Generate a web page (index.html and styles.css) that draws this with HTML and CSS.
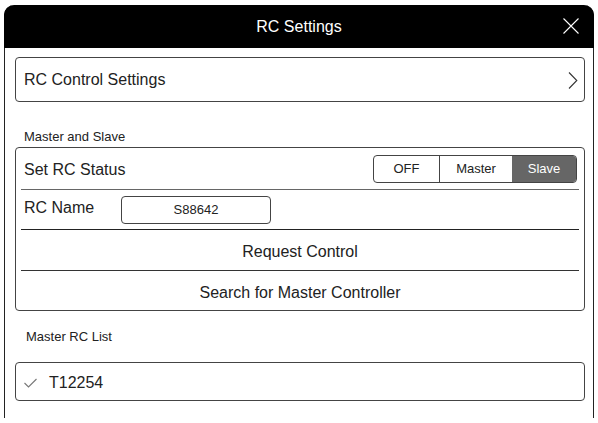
FILE: index.html
```html
<!DOCTYPE html>
<html>
<head>
<meta charset="utf-8">
<link rel="stylesheet" href="styles.css">
</head>
<body>
<div class="dialog">
  <div class="header">
    <span class="title">RC Settings</span>
    <svg class="close" width="16" height="16" viewBox="0 0 16 16"><path d="M0.5 0.5 L15.5 15.5 M15.5 0.5 L0.5 15.5" stroke="#fff" stroke-width="1.1" fill="none"/></svg>
  </div>
  <div class="content">
    <div class="box nav-row">
      <span>RC Control Settings</span>
      <svg class="chev" width="10" height="17" viewBox="0 0 10 17"><path d="M1 0.5 L8.8 8.5 L1 16.5" stroke="#333" stroke-width="1.1" fill="none"/></svg>
    </div>
    <div class="section-label label-ms">Master and Slave</div>
    <div class="box group">
      <div class="row status-row">
        <span>Set RC Status</span>
        <div class="seg">
          <div class="seg-item off">OFF</div>
          <div class="seg-item master">Master</div>
          <div class="seg-item slave active">Slave</div>
        </div>
      </div>
      <div class="row name-row">
        <span class="name-label">RC Name</span>
        <div class="name-input">S88642</div>
      </div>
      <div class="row action">Request Control</div>
      <div class="row action last">Search for Master Controller</div>
    </div>
    <div class="section-label label-list">Master RC List</div>
    <div class="box list-row">
      <svg class="check" width="13" height="10" viewBox="0 0 13 10"><path d="M0.5 5 L4.5 9 L12.5 1" stroke="#777" stroke-width="1.1" fill="none"/></svg>
      <span>T12254</span>
    </div>
  </div>
</div>
</body>
</html>
```
FILE: styles.css
```css
html, body {
  margin: 0;
  padding: 0;
  background: #fff;
  overflow: hidden;
}
body {
  font-family: "Liberation Sans", Arial, sans-serif;
  color: #222;
}
.dialog {
  margin: 5px 4px 0 4px;
  width: 590px;
  height: 413px;
  box-sizing: border-box;
  border-left: 1px solid #222;
  border-right: 1px solid #222;
  border-radius: 10px 10px 0 0;
}
.header {
  height: 43px;
  background: #000;
  margin: 0 -1px;
  border-radius: 10px 10px 0 0;
  display: flex;
  align-items: center;
  justify-content: center;
  position: relative;
}
.title {
  color: #fff;
  font-size: 16px;
}
.close {
  position: absolute;
  right: 15px;
  top: 13px;
}
.content {
  padding: 9px 8px 0 10px;
}
.box {
  border: 1px solid #444;
  border-radius: 4px;
  box-sizing: border-box;
}
.nav-row {
  height: 45px;
  display: flex;
  align-items: center;
  justify-content: space-between;
  padding: 1px 6px 0 8px;
  font-size: 16px;
}
.chev {
  margin-top: 0;
}
.section-label {
  font-size: 13px;
  padding-left: 9px;
}
.label-ms {
  margin-top: 27px;
  line-height: 16px;
}
.group {
  margin-top: 2px;
  padding: 0 5px;
}
.row {
  display: flex;
  align-items: center;
  font-size: 16px;
  border-bottom: 1px solid #555;
}
.status-row {
  height: 41px;
  justify-content: space-between;
  padding-left: 3px;
  border-bottom-color: #666;
}
.status-row > span {
  margin-top: 2px;
}
.seg {
  display: flex;
  height: 28px;
  border: 1px solid #444;
  border-radius: 4px;
  overflow: hidden;
  box-sizing: border-box;
  margin-right: 2px;
  margin-top: 0;
}
.seg-item {
  font-size: 13px;
  display: flex;
  align-items: center;
  justify-content: center;
}
.seg-item.off {
  width: 65px;
  border-right: 1px solid #444;
}
.seg-item.master {
  width: 72px;
}
.seg-item.slave {
  width: 64px;
}
.seg-item.active {
  background: #666;
  color: #fff;
}
.name-row {
  height: 39px;
  padding-left: 3px;
  border-bottom-color: #222;
}
.name-label {
  width: 97px;
  margin-top: -4px;
}
.name-input {
  width: 150px;
  height: 28px;
  box-sizing: border-box;
  border: 1px solid #444;
  border-radius: 4px;
  font-size: 13px;
  display: flex;
  align-items: center;
  justify-content: center;
  margin-top: 0;
}
.action {
  height: 36px;
  padding-top: 4px;
  justify-content: center;
  border-bottom-color: #333;
}
.action.last {
  height: 35px;
  border-bottom: none;
}
.label-list {
  margin-top: 18px;
  line-height: 16px;
  padding-left: 11px;
}
.list-row {
  margin-top: 17px;
  height: 39px;
  display: flex;
  align-items: center;
  padding: 3px 0 0 8px;
  font-size: 16px;
}
.check {
  margin-right: 12px;
  margin-top: 0;
}
```
